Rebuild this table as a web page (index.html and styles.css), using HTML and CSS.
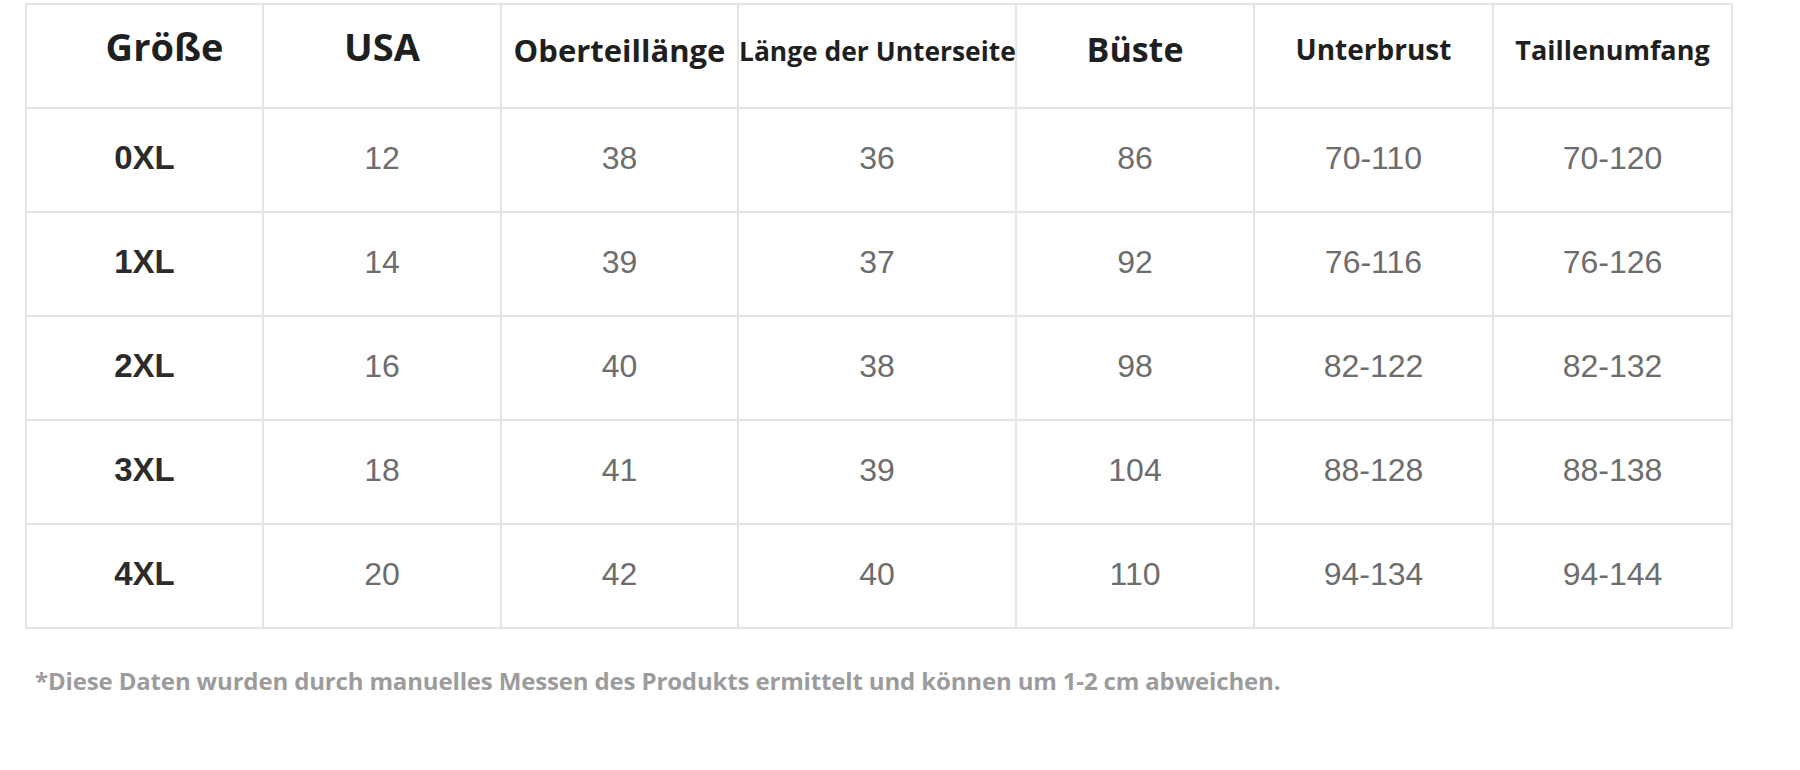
FILE: index.html
```html
<!DOCTYPE html>
<html lang="de">
<head>
<meta charset="utf-8">
<title>Größentabelle</title>
<link rel="stylesheet" href="styles.css">
</head>
<body>
<main class="page">
  <table class="size-table">
    <colgroup>
      <col class="c1"><col class="c2"><col class="c3"><col class="c4"><col class="c5"><col class="c6"><col class="c7">
    </colgroup>
    <thead>
      <tr>
        <th class="h-big h-first">Größe</th>
        <th class="h-big">USA</th>
        <th class="h-mid">Oberteillänge</th>
        <th class="h-small">Länge der Unterseite</th>
        <th class="h-large">Büste</th>
        <th class="h-med">Unterbrust</th>
        <th class="h-med2">Taillenumfang</th>
      </tr>
    </thead>
    <tbody>
      <tr><td class="size">0XL</td><td>12</td><td>38</td><td>36</td><td>86</td><td>70-110</td><td>70-120</td></tr>
      <tr><td class="size">1XL</td><td>14</td><td>39</td><td>37</td><td>92</td><td>76-116</td><td>76-126</td></tr>
      <tr><td class="size">2XL</td><td>16</td><td>40</td><td>38</td><td>98</td><td>82-122</td><td>82-132</td></tr>
      <tr><td class="size">3XL</td><td>18</td><td>41</td><td>39</td><td>104</td><td>88-128</td><td>88-138</td></tr>
      <tr><td class="size">4XL</td><td>20</td><td>42</td><td>40</td><td>110</td><td>94-134</td><td>94-144</td></tr>
    </tbody>
  </table>
  <p class="note">*Diese Daten wurden durch manuelles Messen des Produkts ermittelt und können um 1-2 cm abweichen.</p>
</main>
</body>
</html>
```

FILE: styles.css
```css
html, body {
  margin: 0;
  padding: 0;
  background: #ffffff;
}

.page {
  padding: 3px 0 0 25px;
}

.size-table {
  border-collapse: collapse;
  table-layout: fixed;
  width: 1708px;
  border: 2px solid #e4e4e4;
}

.c1 { width: 237px; }
.c2 { width: 238px; }
.c3 { width: 237px; }
.c4 { width: 278px; }
.c5 { width: 238px; }
.c6 { width: 239px; }
.c7 { width: 239px; }

.size-table th,
.size-table td {
  border: 2px solid #e4e4e4;
  padding: 0;
  text-align: center;
  white-space: nowrap;
}

.size-table tr {
  height: 104px;
}

.size-table th {
  font-family: "Open Sans", "Noto Sans", sans-serif;
  font-weight: 700;
  color: #1f1f1f;
  vertical-align: top;
  line-height: 1;
}

.h-big {
  font-size: 38px;
  padding-top: 22px !important;
}

.h-first {
  padding-left: 40px !important;
}

.h-large {
  font-size: 34px;
  padding-top: 27px !important;
}

.h-mid {
  font-size: 31px;
  padding-top: 30px !important;
}

.h-small {
  font-size: 26.4px;
  padding-top: 33px !important;
}

.h-med {
  font-size: 28px;
  padding-top: 30px !important;
}

.h-med2 {
  font-size: 27px;
  padding-top: 31px !important;
}

.size-table td {
  font-family: "Liberation Sans", Arial, sans-serif;
  font-size: 32px;
  color: #6d6d6d;
  vertical-align: middle;
  padding-bottom: 4px;
}

.size-table td.size {
  font-weight: 700;
  font-size: 33px;
  color: #2b2b2b;
}

.note {
  margin: 34px 0 0 10px;
  font-family: "Open Sans", "Noto Sans", sans-serif;
  font-weight: 700;
  font-size: 24px;
  letter-spacing: -0.15px;
  line-height: 36px;
  color: #9c9c9c;
}
```
